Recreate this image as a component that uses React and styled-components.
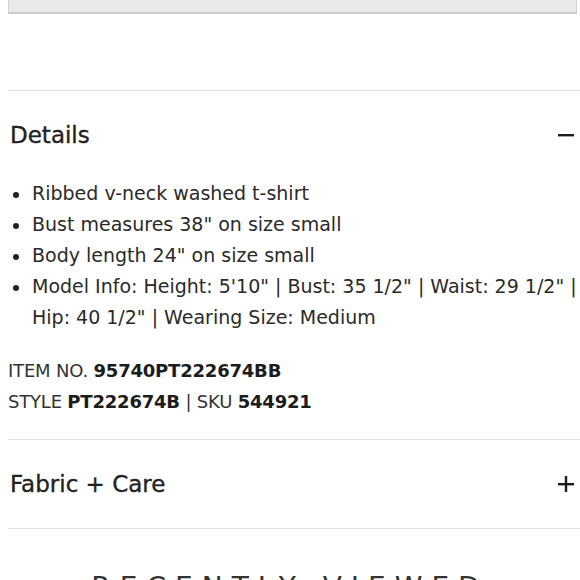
import React, { useState } from 'react';
import styled, { createGlobalStyle } from 'styled-components';

const GlobalStyle = createGlobalStyle`
  html, body {
    margin: 0;
    padding: 0;
    background: #fff;
    overflow: hidden;
  }
  body {
    font-family: "DejaVu Sans", "Liberation Sans", sans-serif;
    color: #222;
  }
`;

const Page = styled.div`
  width: 580px;
  height: 580px;
  overflow: hidden;
  padding-left: 8px;
  box-sizing: border-box;
`;

const TopBox = styled.div`
  height: 12px;
  margin-right: 3px;
  background: #e9e9e9;
  border-left: 1px solid #d2d2d2;
  border-right: 1px solid #d2d2d2;
  border-bottom: 2px solid #cbcbcb;
  margin-bottom: 76px;
`;

const Section = styled.section`
  border-top: 1px solid #e2e2e2;
  &:last-of-type {
    border-bottom: 1px solid #e2e2e2;
  }
`;

const Header = styled.button`
  all: unset;
  box-sizing: border-box;
  width: 100%;
  display: flex;
  align-items: center;
  justify-content: space-between;
  padding: ${(p) => (p.$open ? '29px 6px 0 2px' : '29px 6px 29px 2px')};
  cursor: pointer;
`;

const Title = styled.h2`
  margin: 0;
  font-size: 23px;
  line-height: 30px;
  font-weight: 500;
  color: #222;
  -webkit-text-stroke: 0.35px #222;
`;

const Toggle = styled.svg`
  width: 16px;
  height: 16px;
  flex: none;
`;

const Body = styled.div`
  padding: 28px 0 22px 0;
`;

const List = styled.ul`
  margin: 0 0 22px 0;
  padding: 0 0 0 24px;
  list-style: none;
`;

const Item = styled.li`
  position: relative;
  font-size: 19px;
  line-height: 31px;
  color: #2a2a2a;
  &::before {
    content: '';
    position: absolute;
    left: -19px;
    top: 14px;
    width: 6px;
    height: 6px;
    border-radius: 50%;
    background: #222;
  }
`;

const Meta = styled.p`
  margin: 0;
  font-size: 18px;
  line-height: 31px;
  letter-spacing: -0.2px;
  color: #333;
  b {
    font-weight: 700;
    color: #1c1c1c;
  }
`;

const Recent = styled.h3`
  margin: 42px 0 0 -8px;
  text-align: center;
  font-size: 28px;
  line-height: 34px;
  font-weight: 400;
  letter-spacing: 9px;
  color: #333;
`;

const Minus = () => (
  <Toggle viewBox="0 0 16 16">
    <rect x="0" y="7" width="16" height="2.4" fill="#1c1c1c" />
  </Toggle>
);

const Plus = () => (
  <Toggle viewBox="0 0 16 16">
    <rect x="0" y="7" width="16" height="2.4" fill="#1c1c1c" />
    <rect x="6.8" y="0" width="2.4" height="16" fill="#1c1c1c" />
  </Toggle>
);

const bullets = [
  'Ribbed v-neck washed t-shirt',
  'Bust measures 38" on size small',
  'Body length 24" on size small',
  'Model Info: Height: 5\'10" | Bust: 35 1/2" | Waist: 29 1/2" | Hip: 40 1/2" | Wearing Size: Medium',
];

export default function App() {
  const [open, setOpen] = useState({ details: true, fabric: false });
  const toggle = (k) => setOpen((o) => ({ ...o, [k]: !o[k] }));

  return (
    <>
      <GlobalStyle />
      <Page>
        <TopBox />
        <Section>
          <Header $open={open.details} onClick={() => toggle('details')}>
            <Title>Details</Title>
            {open.details ? <Minus /> : <Plus />}
          </Header>
          {open.details && (
            <Body>
              <List>
                {bullets.map((b) => (
                  <Item key={b}>{b}</Item>
                ))}
              </List>
              <Meta>
                ITEM NO. <b>95740PT222674BB</b>
              </Meta>
              <Meta>
                STYLE <b>PT222674B</b> | SKU <b>544921</b>
              </Meta>
            </Body>
          )}
        </Section>
        <Section>
          <Header $open={open.fabric} onClick={() => toggle('fabric')}>
            <Title>Fabric + Care</Title>
            {open.fabric ? <Minus /> : <Plus />}
          </Header>
        </Section>
        <Recent>RECENTLY VIEWED</Recent>
      </Page>
    </>
  );
}
